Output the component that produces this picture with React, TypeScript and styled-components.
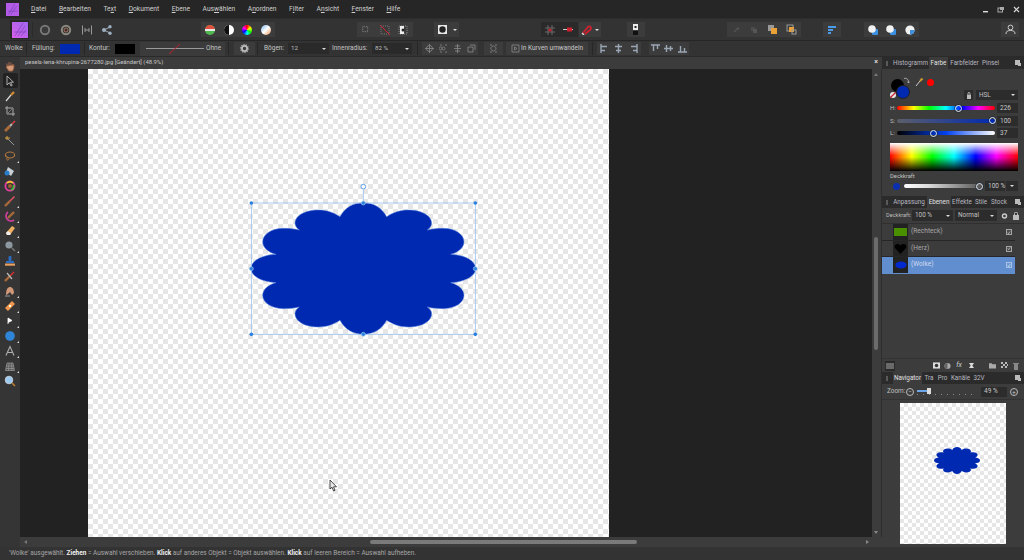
import React from "react";
import styled, { createGlobalStyle } from "styled-components";

const Global = createGlobalStyle`
  html, body { margin: 0; padding: 0; background: #333; overflow: hidden; }
  * { box-sizing: border-box; }
  body { font-family: Roboto, "Liberation Sans", sans-serif; }
`;

const Page = styled.div`
  width: 1024px; height: 560px; display: flex; flex-direction: column; overflow: hidden;
  background: #333; color: #c8c8c8; font-size: 7px; line-height: 1;
`;

/* ---------- Menu ---------- */
const MenuBar = styled.header`
  height: 18px; background: #262626; display: flex; align-items: center; padding-left: 6px; position: relative;
`;
const MenuList = styled.nav`display: flex; margin-left: 12px; gap: 12.5px; font-size: 6.7px; color: #cfcfcf;`;
const MenuItem = styled.span`u { text-decoration: underline; }`;
const WindowButtons = styled.div`margin-left: auto; display: flex; gap: 8px; padding-right: 4px; align-items: center;`;

/* ---------- Toolbar ---------- */
const Toolbar = styled.div`
  height: 23px; background: #333; border-top: 1px solid #2c2c2c; border-bottom: 1px solid #262626;
  display: flex; align-items: center;
`;
const Group = styled.div<{ $ml: number; $dark?: boolean }>`
  display: flex; margin-left: ${p => p.$ml}px; height: 15px;
  background: ${p => (p.$dark ? "#272727" : "transparent")};
`;
const Tile = styled.div<{ $w?: number; $bg?: string }>`
  width: ${p => p.$w ?? 18.5}px; height: 100%; display: flex; align-items: center; justify-content: center; flex: none;
  background: ${p => p.$bg ?? "#3c3c3c"};
`;
const LogoWell = styled.div`
  margin-left: 10px; width: 19px; height: 19px; background: #272727; display: flex; align-items: center; justify-content: center;
`;
const ToolSep = styled.div`width: 1px; height: 15px; background: #2a2a2a; margin-left: 3px;`;
const Plain = styled.div<{ $ml: number }>`margin-left: ${p => p.$ml}px; width: 12px; height: 14px; display: flex; align-items: center; justify-content: center;`;
const Caret = styled.span`
  width: 0; height: 0; border-left: 2px solid transparent; border-right: 2px solid transparent; border-top: 2px solid #ddd;
`;

/* ---------- Context bar ---------- */
const ContextBar = styled.div`
  height: 16px; background: #333; border-bottom: 1px solid #2a2a2a; display: flex; align-items: center; font-size: 6.5px; color: #c4c4c4;
`;
const CtxLabel = styled.span<{ $ml: number; $w?: number }>`margin-left: ${p => p.$ml}px; width: ${p => (p.$w ? p.$w + "px" : "auto")}; white-space: nowrap; flex: none;`;
const CtxSep = styled.div<{ $ml: number }>`width: 1px; height: 13px; background: #262626; margin-left: ${p => p.$ml}px; flex: none;`;
const Swatch = styled.div<{ $c: string; $ml: number }>`width: 20px; height: 10px; background: ${p => p.$c}; margin-left: ${p => p.$ml}px; flex: none;`;
const StrokeBox = styled.div`
  margin-left: 5px; width: 85px; height: 14px; background: #3b3b3b; display: flex; align-items: center; padding-left: 6px; position: relative; font-size: 6.5px; flex: none;
`;
const StrokeLine = styled.div`width: 58px; height: 1px; background: #999; margin-right: 2px;`;
const RedSlash = styled.svg`position: absolute; left: 28px; top: 1px;`;
const NumBox = styled.div<{ $ml: number; $w: number }>`
  margin-left: ${p => p.$ml}px; width: ${p => p.$w}px; height: 11px; background: #2a2a2a; display: flex; align-items: center; flex: none;
  justify-content: space-between; padding: 0 3px; font-size: 6.2px; color: #bdbdbd;
`;
const CtxTile = styled(Tile)<{ $ml?: number }>`margin-left: ${p => p.$ml ?? 0}px; height: 13px;`;
const CurveButton = styled.div`
  margin-left: 3px; width: 82px; height: 13px; background: #3c3c3c; display: flex; align-items: center; padding-left: 5px; gap: 1px; font-size: 6.5px; white-space: nowrap; color: #c8c8c8; flex: none;
`;

/* ---------- Main ---------- */
const Main = styled.div`flex: 1; display: flex; min-height: 0;`;
const ToolColumn = styled.aside`
  width: 20px; background: #353535; padding-top: 1px; display: flex; flex-direction: column; align-items: center;
`;
const ToolSlot = styled.div<{ $active?: boolean }>`
  width: 15px; height: 15px; display: flex; align-items: center; justify-content: center; position: relative; flex: none;
  background: ${p => (p.$active ? "#222" : "transparent")}; border-radius: 2px;
`;
const Corner = styled.i`
  position: absolute; right: -1px; bottom: 0; width: 0; height: 0; border-left: 2.5px solid transparent; border-bottom: 2.5px solid #ddd;
`;
const Centre = styled.div`width: 862px; display: flex; flex-direction: column;`;
const DocTab = styled.div`
  height: 12px; background: #3c3c3c; display: flex; align-items: center; padding-left: 5px; font-size: 5.9px; color: #c8c8c8; position: relative; flex: none;
`;
const TabClose = styled.span`position: absolute; right: 4px; top: 2px; font-size: 7px; color: #ddd; font-weight: 700;`;
const CanvasRow = styled.div`flex: 1; display: flex; min-height: 0;`;
const Canvas = styled.div`flex: 1; background: #222; padding-left: 68px; position: relative;`;
const Checker = styled.div<{ $size: number }>`
  background-color: #fff;
  background-image: conic-gradient(#e6e6e6 25%, transparent 0 50%, #e6e6e6 0 75%, transparent 0);
  background-size: ${p => p.$size}px ${p => p.$size}px;
`;
const Document = styled(Checker)`width: 521px; height: 100%; position: relative;`;
const Overlay = styled.svg`position: absolute; left: 152px; top: 106px;`;
const Pointer = styled.svg`position: absolute; left: 241px; top: 410px;`;
const VScroll = styled.div`width: 10px; background: #3c3c3c; position: relative; border-right: 1px solid #2e2e2e;`;
const VThumb = styled.div`position: absolute; left: 2px; top: 168px; width: 4px; height: 113px; background: #6c6c6c; border-radius: 2px;`;
const ArrowUp = styled.i`position: absolute; left: 2px; top: 4px; border-left: 2px solid transparent; border-right: 2px solid transparent; border-bottom: 3px solid #777;`;
const ArrowDown = styled.i`position: absolute; left: 2px; bottom: 3px; border-left: 2px solid transparent; border-right: 2px solid transparent; border-top: 3px solid #888;`;
const HScroll = styled.div`height: 10px; background: #3c3c3c; display: flex; align-items: center; position: relative; flex: none;`;
const HThumb = styled.div`position: absolute; left: 350px; width: 267px; height: 4px; background: #7a7a7a; border-radius: 2px;`;
const ArrowLeft = styled.i`position: absolute; left: 4px; border-top: 2px solid transparent; border-bottom: 2px solid transparent; border-right: 3px solid #777;`;
const ArrowRight = styled.i`position: absolute; right: 13px; border-top: 2px solid transparent; border-bottom: 2px solid transparent; border-left: 3px solid #888;`;
const StatusBar = styled.footer`
  height: 13px; background: #333; display: flex; align-items: center; padding-left: 9px; font-size: 6.45px; color: #a6a6a6; white-space: nowrap;
  b { color: #f0f0f0; font-weight: 700; }
`;

/* ---------- Right panel ---------- */
const Side = styled.aside`width: 142px; background: #3c3c3c; display: flex; flex-direction: column;`;
const Tabs = styled.div`height: 12px; background: #2b2b2b; display: flex; align-items: stretch; position: relative; flex: none; font-size: 6.3px; color: #b8b8c0;`;
const Grip = styled.i`width: 2px; height: 5px; margin: 3.5px 0 0 4px; background: #5a5a5a; flex: none;`;
const TabLabel = styled.span<{ $active?: boolean; $ml: number; $w: number }>`
  display: flex; align-items: center; justify-content: center; width: ${p => p.$w}px; margin-left: ${p => p.$ml}px; white-space: nowrap; flex: none;
  background: ${p => (p.$active ? "#3c3c3c" : "transparent")}; color: ${p => (p.$active ? "#e2e2e2" : "#b8b8c0")};
`;
const TabMenu = styled.i`position: absolute; right: 4px; top: 3px; width: 5px; height: 5px; background: #bbb; box-shadow: 2px 2px 0 -1px #bbb;`;

const ColourPanel = styled.section`height: 127px; padding: 0 6px 0 8px; display: flex; flex-direction: column; position: relative; flex: none;`;
const ColourTop = styled.div`height: 33px; position: relative; flex: none;`;
const Dot = styled.i<{ $x: number; $y: number; $d: number; $c: string; $ring?: string }>`
  position: absolute; left: ${p => p.$x}px; top: ${p => p.$y}px; width: ${p => p.$d}px; height: ${p => p.$d}px; border-radius: 50%;
  background: ${p => p.$c}; ${p => (p.$ring ? `border: 1px solid ${p.$ring};` : "")}
`;
const Dropper = styled.svg`position: absolute; left: 25px; top: 8px;`;
const SwapArrow = styled.svg`position: absolute; left: 13px; top: 8px;`;
const NoneMark = styled.svg`position: absolute; left: 0; top: 23px;`;
const ColourControls = styled.div`position: absolute; right: 0; top: 21px; display: flex; align-items: center; gap: 3px;`;
const LockButton = styled.div`width: 9px; height: 10px; background: #2c2c2c; display: flex; align-items: center; justify-content: center;`;
const Select = styled.div<{ $w: number; $h?: number }>`
  width: ${p => p.$w}px; height: ${p => p.$h ?? 10}px; background: #2c2c2c; display: flex; align-items: center; justify-content: space-between; padding: 0 3px;
  font-size: 6.4px; color: #c2c2c2; flex: none;
`;
const SliderRow = styled.div`height: 12.5px; display: flex; align-items: center; flex: none;`;
const SliderLabel = styled.span`width: 7px; font-size: 6.2px; color: #bbb;`;
const Track = styled.div<{ $bg: string }>`width: 98px; height: 4px; border-radius: 2px; background: ${p => p.$bg}; position: relative;`;
const Knob = styled.i<{ $at: number }>`
  position: absolute; left: ${p => p.$at}px; top: -1.5px; width: 7px; height: 7px; border-radius: 50%; border: 1px solid #dfe6f2; background: transparent; box-shadow: 0 0 0 .5px #123;
`;
const ValueBox = styled.div<{ $ml?: number; $w?: number }>`
  margin-left: ${p => p.$ml ?? 2}px; width: ${p => p.$w ?? 21}px; height: 10px; background: #2c2c2c; display: flex; align-items: center; padding-left: 3px; font-size: 6.5px; color: #c8c8c8; white-space: nowrap; flex: none;
`;
const Spectrum = styled.div`
  margin-top: 3.5px; height: 28px; flex: none; position: relative;
  background:
    linear-gradient(to bottom, rgba(255,255,255,1) 0%, rgba(255,255,255,0) 45%, rgba(0,0,0,0) 50%, rgba(0,0,0,1) 100%),
    linear-gradient(to right, #f00, #ff0 17%, #0f0 33%, #0ff 50%, #00f 67%, #f0f 83%, #f00);
`;
const OpacityLabel = styled.div`margin-top: 2.5px; font-size: 5.8px; color: #c0c0c0; height: 7px; display: flex; align-items: center;`;
const OpacityRow = styled.div`display: flex; align-items: center; height: 10px; margin-top: .5px;`;
const OpacityDot = styled.i`width: 7px; height: 7px; border-radius: 50%; background: #0a2fb0; margin-left: 2.5px; flex: none;`;
const OpacityTrack = styled.div`
  margin-left: 4.5px; width: 78px; height: 4px; position: relative; border-radius: 2px; flex: none;
  background: linear-gradient(to right, #fff, #ddd 30%, #555 100%);
`;
const CaretTile = styled(Tile)`margin-left: 1px;`;
const LayerTools = styled.div`height: 16px; display: flex; align-items: center; padding-left: 4px; gap: 2px; font-size: 5.6px; flex: none; color: #bbb; border-bottom: 1px solid #2f2f2f;`;
const ToolsLabel = styled.span`width: 24px; white-space: nowrap;`;
const LayerList = styled.ul`list-style: none; margin: 0 9px 0 0; padding: 0; flex: none;`;
const LayerRow = styled.li<{ $sel?: boolean }>`
  height: 16.5px; display: flex; align-items: center; padding-left: 11px; border-bottom: 1px solid ${p => (p.$sel ? "transparent" : "#262626")};
  background: ${p => (p.$sel ? "#618ecf" : "transparent")}; font-size: 6.6px; color: ${p => (p.$sel ? "#cfdcf0" : "#a8a8a8")}; position: relative;
`;
const Thumb = styled.div`width: 15px; height: 15.5px; background: #222; display: flex; align-items: center; justify-content: center; margin-right: 3px; flex: none;`;
const Check = styled.div<{ $sel?: boolean }>`
  position: absolute; right: 3px; top: 5px; width: 6px; height: 6px; border: 1px solid ${p => (p.$sel ? "#a8c0e4" : "#a5a5a5")}; background: ${p => (p.$sel ? "#6f97d4" : "#4a4a4a")};
  display:flex; align-items:center; justify-content:center;
`;
const LayersSpace = styled.div`height: 84.5px; flex: none;`;
const LayerFooter = styled.div`height: 14px; flex: none; background: #3c3c3c; border-top: 1px solid #333; display: flex; align-items: center; position: relative;`;
const StackBtn = styled.div`width: 10px; height: 10px; background: #2a2a2a; margin-left: 3px; display: flex; align-items: center; justify-content: center; flex: none;`;
const FootIcon = styled.div<{ $ml: number }>`width: 7px; height: 7px; margin-left: ${p => p.$ml}px; display: flex; align-items: center; justify-content: center; font-size: 7px; color: #ccc; font-style: italic; flex: none;`;
const ZoomRow = styled.div`height: 16px; flex: none; display: flex; align-items: center; padding-left: 5px; font-size: 6.4px; color: #c0c0c0; border-bottom: 1px solid #333;`;
const ZoomLabel = styled.span`width: 17px; flex: none;`;
const RoundBtn = styled.div<{ $ml: number }>`
  width: 8px; height: 8px; border-radius: 50%; border: 1px solid #bbb; margin-left: ${p => p.$ml}px; display: flex; align-items: center; justify-content: center; font-size: 6px; color: #ccc; flex: none;
`;
const ZoomTrack = styled.div`
  margin-left: 3px; width: 60px; height: 8px; position: relative; flex: none;
  background: repeating-linear-gradient(to right, #8a8a8a 0 1px, transparent 1px 6px) 0 6px / 100% 1px no-repeat;
`;
const ZoomFill = styled.i`position: absolute; left: 0; top: 2px; width: 12px; height: 2px; background: #6ea5e8;`;
const ZoomKnob = styled.i`position: absolute; left: 10px; top: 0; width: 4px; height: 6px; background: #ddd;`;
const PreviewWrap = styled.div`flex: 1; min-height: 0; padding: 3px 18px; display: flex;`;
const Preview = styled(Checker)`width: 106px; height: 100%; display: flex; align-items: flex-start; justify-content: flex-start; padding: 44px 0 0 34px;`;

/* ---------- Drawings ---------- */
type Pt = [number, number];
type Seg = [Pt, Pt, Pt];
const CX = 370, CY = 280.5;
const start: Pt = [CX, 83];
const quarter: Seg[] = [
  [[340, 83], [315, 97], [300, 125]],
  [[280, 112], [260, 105], [235, 105]],
  [[195, 105], [165, 122], [165, 145]],
  [[165, 152], [170, 160], [178, 165]],
  [[165, 162], [150, 160], [130, 160]],
  [[95, 160], [68, 178], [68, 200]],
  [[68, 218], [85, 232], [108, 238]],
  [[65, 240], [33, 258], [33, CY]],
];
const reverse = (from: Pt, segs: Seg[]): Seg[] => {
  const pts = [from, ...segs.map(s => s[2])];
  return segs.map((_, i) => {
    const k = segs.length - 1 - i;
    return [segs[k][1], segs[k][0], pts[k]] as Seg;
  });
};
const mapSegs = (segs: Seg[], f: (p: Pt) => Pt): Seg[] => segs.map(s => [f(s[0]), f(s[1]), f(s[2])] as Seg);
const my = (p: Pt): Pt => [p[0], 2 * CY - p[1]];
const mx = (p: Pt): Pt => [2 * CX - p[0], p[1]];
const leftBottom = mapSegs(reverse(start, quarter), my);
const bottomRight = mapSegs(quarter, p => mx(my(p)));
const rightTop = mapSegs(reverse(start, quarter), mx);
const cloud = `M${start.join(" ")}` + [...quarter, ...leftBottom, ...bottomRight, ...rightTop]
  .map(s => `C${s[0].join(" ")} ${s[1].join(" ")} ${s[2].join(" ")}`).join("") + "Z";

const Logo = () => (
  <svg width="16" height="16" viewBox="0 0 16 16">
    <defs><linearGradient id="lg" x1="0" y1="1" x2="1" y2="0"><stop offset="0" stopColor="#d860ea" /><stop offset="1" stopColor="#a266f0" /></linearGradient></defs>
    <rect width="16" height="16" fill="url(#lg)" />
    <path d="M3 14L11 1M6 14L13 4M2 10H14M9 14L14 8" stroke="#7a45b8" strokeWidth=".7" fill="none" />
  </svg>
);
const S = ({ children, w = 12, h = 12, vb = "0 0 12 12" }: { children: React.ReactNode; w?: number; h?: number; vb?: string }) => (
  <svg width={w} height={h} viewBox={vb}>{children}</svg>
);
const Ring = ({ a, b }: { a: string; b: string }) => (
  <S><circle cx="6" cy="6" r="4.2" fill="none" stroke={a} strokeWidth="2" /><circle cx="6" cy="6" r="2" fill="none" stroke={b} strokeWidth="1" /></S>
);
const Studio = () => <S w={10} h={10}><rect x="2" y="2" width="6" height="6" fill="none" stroke="#999" strokeDasharray="1 1" /></S>;
const Disc = ({ main, sub }: { main: string; sub: string }) => (
  <S>
    <rect x="5" y="5" width="6" height="6" rx="1" fill={sub} />
    <circle cx="5" cy="5" r="3.8" fill={main} />
  </S>
);

const tools: { i: React.ReactNode; c?: boolean; a?: boolean }[] = [
  { i: <S><path d="M3 6V3.5M5 5V2M7 5V2.5M9 6V4M3 6L2.5 7.5 5 11H8.5L9.8 8V5Z" stroke="#a0684a" strokeWidth="1" fill="#d59a78" /></S> },
  { i: <S><path d="M3 1V10L5.3 7.7 7 11 8.2 10.4 6.6 7.2H9.5Z" fill="#222" stroke="#ccc" strokeWidth=".8" /></S>, a: true },
  { i: <S><path d="M2 11L7 5" stroke="#ddd" strokeWidth="1.2" /><path d="M7 5L10 2" stroke="#d08a30" strokeWidth="2.4" /></S> },
  { i: <S><path d="M3 1V9H11M1 3H9V11" stroke="#aaa" fill="none" strokeWidth="1" /><path d="M3 9L9 3" stroke="#777" /></S> },
  { i: <S><path d="M1 11L6 6" stroke="#a96a3a" strokeWidth="3" /><path d="M6 6L8 4" stroke="#bbb" strokeWidth="2" /><path d="M8 4L11 1" stroke="#d84040" strokeWidth="1.6" /></S> },
  { i: <S><path d="M3 3L10 10" stroke="#999" strokeWidth="1" /><path d="M1 3H6M3 1V5" stroke="#d8a040" strokeWidth="1" /></S> },
  { i: <S><ellipse cx="6" cy="5" rx="4.6" ry="3" fill="none" stroke="#b07840" strokeWidth="1.2" /><path d="M3 8C2 10 4 11 5 9" fill="none" stroke="#b07840" /></S>, c: true },
  { i: <S><path d="M4 2L10 6 7 11 2 7Z" fill="#c8d0d8" /><circle cx="3" cy="8" r="2.5" fill="#2a7cc8" /></S> },
  { i: <S><circle cx="6" cy="6" r="4.6" fill="none" stroke="#e040a0" strokeWidth="1.8" /><path d="M3 3A4.6 4.6 0 0 1 9 3" stroke="#f0c030" strokeWidth="1.8" fill="none" /><path d="M9.6 5A4.6 4.6 0 0 1 7 10" stroke="#40c040" strokeWidth="1.8" fill="none" /><circle cx="6" cy="6" r="2" fill="#a06030" /></S> },
  { i: <S><path d="M1 11L6 6" stroke="#a96a3a" strokeWidth="2.4" /><path d="M6 6L10.5 1.5" stroke="#e05060" strokeWidth="1.6" /></S>, c: true },
  { i: <S><path d="M4 2A5 5 0 1 0 10 10" stroke="#d040a0" strokeWidth="1.6" fill="none" /><path d="M4 8L10 2" stroke="#a96a3a" strokeWidth="2.4" /></S>, c: true },
  { i: <S><path d="M2 8L8 1 11 3 6 10H3Z" fill="#eeb060" /><path d="M2 8L3 10H6L7 8.5 4 6Z" fill="#eee" /></S>, c: true },
  { i: <S><circle cx="5" cy="5" r="3.6" fill="#8d979f" /><path d="M8 8L11 11" stroke="#777" strokeWidth="1.5" /></S>, c: true },
  { i: <S><rect x="4.5" y="1" width="3" height="5" rx="1" fill="#2a6cc0" /><rect x="2" y="6" width="8" height="2" fill="#2a6cc0" /><rect x="1" y="8.5" width="10" height="2.2" fill="#e8a060" /></S> },
  { i: <S><path d="M1 11L6 6" stroke="#a96a3a" strokeWidth="2.4" /><path d="M6 6L10 2" stroke="#d03030" strokeWidth="1.6" /><path d="M3 3L8 9" stroke="#bbb" strokeWidth="1.2" /></S> },
  { i: <S><path d="M2 10C2 4 4 2 6 2S10 4 10 8L8 10 6 7 4 9Z" fill="#d09878" /><path d="M1 11H6" stroke="#999" /></S>, c: true },
  { i: <S><path d="M2 8L8 2 10 4 4 10Z" fill="#f09a50" stroke="#f09a50" strokeWidth="1.4" /><rect x="5" y="5" width="2" height="2" fill="#ffd" /></S>, c: true },
  { i: <S><path d="M4 3V9M4 3L8 5.5 4 7.5" fill="#fff" stroke="#fff" strokeWidth=".8" /></S>, c: true },
  { i: <S><circle cx="6" cy="6" r="4.8" fill="#2f86d8" /></S>, c: true },
  { i: <S><path d="M2 10.5L6 1.5 10 10.5M4 7.5H8" fill="none" stroke="#b0b0b0" strokeWidth="1.1" /></S>, c: true },
  { i: <S><path d="M1.5 10.5L3 3H9L10.5 10.5ZM5 3L4.5 10.5M7.5 3L8 10.5M2.3 6H9.7M2 8.5H10" fill="#555" stroke="#999" strokeWidth=".7" /></S>, c: true },
  { i: <S><circle cx="5" cy="5" r="3.8" fill="#9ccaf0" stroke="#d0d8e0" strokeWidth=".8" /><path d="M8 8L11 11" stroke="#c08030" strokeWidth="1.5" /></S> },
];

const AlignIcon = ({ d }: { d: string }) => <S w={9} h={9} vb="0 0 9 9"><path d={d} stroke="#9aa6b4" strokeWidth="1.4" fill="none" /></S>;
const SnapIcon = ({ d }: { d: string }) => <S w={9} h={9} vb="0 0 9 9"><path d={d} stroke="#8a8a8a" strokeWidth=".8" fill="none" /></S>;
const Tick = ({ c }: { c: string }) => <S w={5} h={5} vb="0 0 5 5"><path d="M1 2.5L2 4 4 1" stroke={c} fill="none" strokeWidth=".8" /></S>;

const menu: [string, string, string][] = [
  ["", "D", "atei"], ["", "B", "earbeiten"], ["Te", "x", "t"], ["", "D", "okument"], ["", "E", "bene"],
  ["Aus", "w", "ählen"], ["A", "n", "ordnen"], ["F", "i", "lter"], ["A", "n", "sicht"], ["", "F", "enster"], ["", "H", "ilfe"],
];

export default function App() {
  return (
    <Page>
      <Global />
      <MenuBar>
        <S w={13} h={13} vb="0 0 16 16"><rect width="16" height="16" fill="#b45ce8" /><path d="M3 14L11 1M6 14L13 4M2 10H14" stroke="#7a45b8" strokeWidth=".9" /></S>
        <MenuList>
          {menu.map(([a, b, c]) => <MenuItem key={a + b + c}>{a}<u>{b}</u>{c}</MenuItem>)}
        </MenuList>
        <WindowButtons>
          <S w={7} h={7} vb="0 0 7 7"><rect x="1" y="5" width="5" height="1.4" fill="#ddd" /></S>
          <S w={8} h={7} vb="0 0 8 7"><rect x="1" y="2" width="4.5" height="4" fill="none" stroke="#aaa" /><rect x="3" y="1" width="4" height="3" fill="#aaa" /></S>
          <S w={7} h={7} vb="0 0 7 7"><path d="M1 1L6 6M6 1L1 6" stroke="#ddd" strokeWidth="1.2" /></S>
        </WindowButtons>
      </MenuBar>

      <Toolbar>
        <LogoWell><Logo /></LogoWell>
        <ToolSep />
        <Plain $ml={6}><Ring a="#777" b="#444" /></Plain>
        <Plain $ml={9}><Ring a="#8a8a80" b="#a87060" /></Plain>
        <Plain $ml={9}><S><path d="M1.5 1.5V10.5M10.5 1.5V10.5M4 6H8M4 4V8M8 4V8" stroke="#999" strokeWidth="1" /></S></Plain>
        <Plain $ml={8}><S><circle cx="3" cy="6" r="2" fill="#9fb0c0" /><circle cx="9" cy="2.8" r="1.7" fill="#9fb0c0" /><circle cx="9" cy="9.2" r="1.7" fill="#9fb0c0" /><path d="M3 6L9 3M3 6L9 9" stroke="#9fb0c0" /></S></Plain>
        <Group $ml={88}>
          <Tile><S><circle cx="6" cy="6" r="5" fill="#50b850" /><path d="M1 6A5 5 0 0 1 11 6Z" fill="#e05040" /><rect x="1" y="5" width="10" height="2" fill="#e8e8e8" /></S></Tile>
          <Tile><S><circle cx="6" cy="6" r="5" fill="#fff" /><path d="M6 1A5 5 0 0 0 6 11Z" fill="#111" /></S></Tile>
          <Tile><div style={{ width: 10, height: 10, borderRadius: "50%", background: "conic-gradient(#f00,#ff0,#0f0,#0ff,#00f,#f0f,#f00)" }} /></Tile>
          <Tile><S><defs><linearGradient id="b" x1="0" y1="0" x2="1" y2="1"><stop offset="0" stopColor="#7ab8f0" /><stop offset=".5" stopColor="#fff" /><stop offset="1" stopColor="#f09050" /></linearGradient></defs><circle cx="6" cy="6" r="5" fill="url(#b)" /></S></Tile>
        </Group>
        <Group $ml={82}>
          <Tile><Studio /></Tile>
          <Tile><S w={10} h={10} vb="0 0 10 10"><rect x="1" y="1" width="8" height="8" fill="none" stroke="#777" strokeDasharray="1 1" /><path d="M0 0L10 10" stroke="#d02030" /></S></Tile>
          <Tile><S w={10} h={10} vb="0 0 10 10"><rect x="1" y="1" width="8" height="8" fill="none" stroke="#888" strokeDasharray="1 1" /><rect x="2" y="1" width="4" height="8" fill="#eee" /><circle cx="5" cy="5" r="1.5" fill="#222" /></S></Tile>
        </Group>
        <Group $ml={21}>
          <Tile $w={18}><S w={11} h={11} vb="0 0 11 11"><rect x="1" y="1" width="9" height="9" fill="#e8e8e8" /><circle cx="5.5" cy="5.5" r="3.2" fill="#222" /></S></Tile>
          <Tile $w={7}><Caret /></Tile>
        </Group>
        <Group $ml={82} $dark>
          <Tile $w={18.5} $bg="#2a2a2a"><S w={10} h={10} vb="0 0 10 10"><path d="M3 0V10M7 0V10M0 3H10M0 7H10" stroke="#777" strokeWidth=".8" /><circle cx="5" cy="5" r="1.6" fill="#d02030" /></S></Tile>
          <Tile $w={18.5} $bg="#2a2a2a"><S w={10} h={10} vb="0 0 10 10"><rect x="0" y="4" width="10" height="1" fill="#ccc" /><rect x="4" y="2.5" width="5" height="4" fill="#d02030" /></S></Tile>
        </Group>
        <Group $ml={1}>
          <Tile $w={15}><S w={11} h={11} vb="0 0 11 11"><path d="M2 9L7 3C9 1 11 4 9 6L4 10" fill="none" stroke="#d02030" strokeWidth="1.8" /><path d="M1 9L3 11" stroke="#ddd" strokeWidth="1.4" /></S></Tile>
          <Tile $w={7}><Caret /></Tile>
        </Group>
        <Group $ml={26}>
          <Tile $w={18}><S w={9} h={11} vb="0 0 9 11"><rect x="2" y="0" width="5" height="6" fill="#eee" /><rect x="3.5" y="2" width="2" height="2" fill="#222" /><rect x="2" y="7" width="5" height="4" fill="#111" /></S></Tile>
        </Group>
        <Group $ml={82}>
          <Tile $w={18.5}><S w={10} h={10} vb="0 0 10 10"><path d="M3 7L7 3M6 3H7.5V4.5" stroke="#555" strokeWidth="1.2" fill="none" /></S></Tile>
          <Tile $w={18.5}><S w={10} h={10} vb="0 0 10 10"><rect x="2" y="2" width="4" height="4" fill="#4c4c4c" /><rect x="4" y="4" width="4" height="4" fill="#555" /></S></Tile>
          <Tile $w={18.5}><S w={11} h={11} vb="0 0 11 11"><rect x="1" y="1" width="6" height="6" fill="#999" /><rect x="4" y="4" width="6" height="6" fill="#eaa238" /></S></Tile>
          <Tile $w={18.5}><S w={11} h={11} vb="0 0 11 11"><rect x="1" y="1" width="6" height="6" fill="none" stroke="#999" /><rect x="3" y="3" width="5" height="5" fill="#eaa238" /><rect x="6" y="6" width="4" height="4" fill="none" stroke="#999" /></S></Tile>
        </Group>
        <Group $ml={22}>
          <Tile $w={18}><S w={10} h={10} vb="0 0 10 10"><rect x="1" y="1" width="8" height="2" fill="#4a9ae8" /><rect x="1" y="4" width="5" height="2" fill="#4a9ae8" /><rect x="1" y="7" width="3" height="2" fill="#4a9ae8" /></S></Tile>
        </Group>
        <Group $ml={23}>
          <Tile><Disc main="#f2f2f2" sub="#3d8fe0" /></Tile>
          <Tile><Disc main="#f2f2f2" sub="#3d8fe0" /></Tile>
          <Tile><S><circle cx="6" cy="6" r="4.6" fill="#f2f2f2" /><path d="M6 6H10.6A4.6 4.6 0 0 1 6 10.6Z" fill="#3d8fe0" /></S></Tile>
        </Group>
        <Group $ml={82}>
          <Tile $w={18}><S w={11} h={11} vb="0 0 11 11"><circle cx="5.5" cy="3.5" r="2.4" fill="none" stroke="#ccc" /><path d="M1 10C1 7 3 6.5 5.5 6.5S10 7 10 10" fill="none" stroke="#ccc" /></S></Tile>
        </Group>
      </Toolbar>

      <ContextBar>
        <CtxLabel $ml={5} $w={17}>Wolke</CtxLabel>
        <CtxSep $ml={4} />
        <CtxLabel $ml={5} $w={23}>Füllung:</CtxLabel>
        <Swatch $c="#0029b2" $ml={5} />
        <CtxSep $ml={4} />
        <CtxLabel $ml={4} $w={21}>Kontur:</CtxLabel>
        <Swatch $c="#000" $ml={5} />
        <StrokeBox>
          <StrokeLine />Ohne
          <RedSlash width="14" height="12" viewBox="0 0 14 12"><path d="M1 11L12 1" stroke="#c02030" strokeWidth="1" /></RedSlash>
        </StrokeBox>
        <CtxSep $ml={3} />
        <CtxTile $w={21} $ml={5}><S w={9} h={9} vb="0 0 9 9"><circle cx="4.5" cy="4.5" r="2.6" fill="none" stroke="#bbb" strokeWidth="1.8" /><circle cx="4.5" cy="4.5" r="3.9" fill="none" stroke="#bbb" strokeWidth="1.1" strokeDasharray="1.2 1.2" /></S></CtxTile>
        <CtxSep $ml={2} />
        <CtxLabel $ml={6} $w={24}>Bögen:</CtxLabel>
        <NumBox $ml={0} $w={41}>12 <Caret /></NumBox>
        <CtxLabel $ml={3} $w={38}>Innenradius:</CtxLabel>
        <NumBox $ml={2} $w={40}>82 % <Caret /></NumBox>
        <CtxSep $ml={5} />
        <CtxTile $w={14} $ml={4}><SnapIcon d="M4.5 0V9M0 4.5H9M4.5 1.5A3 3 0 1 1 4.4 1.5" /></CtxTile>
        <CtxTile $w={14}><SnapIcon d="M1 1H3M6 1H8M1 8H3M6 8H8M3 4.5A1.5 1.5 0 1 1 3 4.4M6 4.5A1.5 1.5 0 1 1 6 4.4" /></CtxTile>
        <CtxTile $w={14}><SnapIcon d="M2 2H7M2 7H7M4.5 0V9M1 4.5H8" /></CtxTile>
        <CtxTile $w={14}><SnapIcon d="M1 3V8H6V3ZM3 1H8V6" /></CtxTile>
        <CtxTile $w={19} $ml={6}><SnapIcon d="M1 1H3M6 1H8M1 8H3M6 8H8M4.5 2A2.5 2.5 0 1 1 4.4 2" /></CtxTile>
        <CurveButton><SnapIcon d="M1 1H8V8H1ZM3.5 3L6 4.5 3.5 6Z" />In Kurven umwandeln</CurveButton>
        <CtxSep $ml={4} />
        <CtxTile $w={14.5} $ml={4}><AlignIcon d="M1 0V9M1 2.5H7M1 6.5H5" /></CtxTile>
        <CtxTile $w={14.5}><AlignIcon d="M4.5 0V9M1 2.5H8M2 6.5H7" /></CtxTile>
        <CtxTile $w={14.5}><AlignIcon d="M8 0V9M2 2.5H8M4 6.5H8" /></CtxTile>
        <CtxTile $w={13.5} $ml={8}><AlignIcon d="M0 1H9M2.5 1V7M6.5 1V5" /></CtxTile>
        <CtxTile $w={13.5}><AlignIcon d="M0 4.5H9M2.5 1V8M6.5 2V7" /></CtxTile>
        <CtxTile $w={13.5}><AlignIcon d="M0 8H9M2.5 2V8M6.5 4V8" /></CtxTile>
      </ContextBar>

      <Main>
        <ToolColumn>
          {tools.map((t, i) => (
            <ToolSlot key={i} $active={t.a}>{t.i}{t.c && <Corner />}</ToolSlot>
          ))}
        </ToolColumn>

        <Centre>
          <DocTab>pexels-lena-khrupina-2677280.jpg [Geändert] (48.9%)<TabClose>×</TabClose></DocTab>
          <CanvasRow>
            <Canvas>
              <Document $size={10}>
                <Overlay width="250" height="170" viewBox="0 0 750 510">
                  <path d={cloud} fill="#0029b2" stroke="#5a86e0" strokeWidth="1.5" />
                  <rect x="34" y="84" width="672" height="394" fill="none" stroke="#9cc2ef" strokeWidth="2.5" />
                  <path d="M370 45V84" stroke="#9cc2ef" strokeWidth="2.5" />
                  <circle cx="370" cy="35" r="7" fill="#fff" stroke="#5e9ee6" strokeWidth="3" />
                  {[[34, 84], [706, 84], [34, 478], [706, 478]].map(([x, y]) => <circle key={`${x}${y}`} cx={x} cy={y} r="5.5" fill="#2a80de" />)}
                  {[[370, 84], [34, 281], [706, 281], [370, 478]].map(([x, y]) => <circle key={`${x}${y}`} cx={x} cy={y} r="6" fill="#2a80de" stroke="#a8ccf0" strokeWidth="2" />)}
                </Overlay>
                <Pointer width="9" height="13" viewBox="0 0 9 13"><path d="M1 1V10L3 8.2 4.6 12 6 11.3 4.5 7.8H7.5Z" fill="#e8e8e8" stroke="#222" strokeWidth=".8" /></Pointer>
              </Document>
            </Canvas>
            <VScroll><ArrowUp /><VThumb /><ArrowDown /></VScroll>
          </CanvasRow>
          <HScroll><ArrowLeft /><HThumb /><ArrowRight /></HScroll>
        </Centre>

        <Side>
          <Tabs>
            <Grip />
            <TabLabel $ml={5} $w={35}>Histogramm</TabLabel>
            <TabLabel $ml={1} $w={19} $active>Farbe</TabLabel>
            <TabLabel $ml={2} $w={29}>Farbfelder</TabLabel>
            <TabLabel $ml={2} $w={19}>Pinsel</TabLabel>
            <TabMenu />
          </Tabs>
          <ColourPanel>
            <ColourTop>
              <Dot $x={0.5} $y={9.5} $d={13} $c="#000" />
              <Dot $x={6} $y={16} $d={14} $c="#0029b2" $ring="#222" />
              <Dot $x={0} $y={23} $d={6} $c="#e8e8e8" />
              <NoneMark width="6" height="6" viewBox="0 0 6 6"><path d="M0.5 5.5L5.5 .5" stroke="#d02030" strokeWidth="1.2" /></NoneMark>
              <SwapArrow width="7" height="7" viewBox="0 0 7 7"><path d="M1 1.5C4 .5 6 3 5.5 6M4.3 4.6L5.5 6 6.7 4.6" stroke="#bbb" strokeWidth=".8" fill="none" /></SwapArrow>
              <Dot $x={36.5} $y={9.5} $d={7} $c="#ff0000" />
              <Dropper width="9" height="10" viewBox="0 0 9 10"><path d="M1 9L5 4" stroke="#ccc" /><path d="M5 4L7.5 1.5" stroke="#d69a30" strokeWidth="2" /></Dropper>
              <ColourControls>
                <LockButton><S w={6} h={7} vb="0 0 6 7"><rect x="1" y="3" width="4" height="4" fill="#bbb" /><path d="M2 3V1.5A1 1 0 0 1 4 1.5V3" fill="none" stroke="#bbb" /></S></LockButton>
                <Select $w={42}>HSL <Caret /></Select>
              </ColourControls>
            </ColourTop>
            <SliderRow>
              <SliderLabel>H:</SliderLabel>
              <Track $bg="linear-gradient(to right,#f00,#ff0 17%,#0f0 33%,#0ff 50%,#00f 67%,#f0f 83%,#f00)"><Knob $at={58} /></Track>
              <ValueBox>226</ValueBox>
            </SliderRow>
            <SliderRow>
              <SliderLabel>S:</SliderLabel>
              <Track $bg="linear-gradient(to right,#5c5f6a,#0029b2)"><Knob $at={92} /></Track>
              <ValueBox>100</ValueBox>
            </SliderRow>
            <SliderRow>
              <SliderLabel>L:</SliderLabel>
              <Track $bg="linear-gradient(to right,#000,#0040f0 50%,#fff)"><Knob $at={33} /></Track>
              <ValueBox>37</ValueBox>
            </SliderRow>
            <Spectrum />
            <OpacityLabel>Deckkraft</OpacityLabel>
            <OpacityRow>
              <OpacityDot />
              <OpacityTrack><Knob $at={72} /></OpacityTrack>
              <ValueBox $ml={3} $w={20}>100 %</ValueBox>
              <CaretTile $w={12} $bg="#2c2c2c"><Caret /></CaretTile>
            </OpacityRow>
          </ColourPanel>

          <Tabs>
            <Grip />
            <TabLabel $ml={5} $w={32}>Anpassung</TabLabel>
            <TabLabel $ml={2} $w={24} $active>Ebenen</TabLabel>
            <TabLabel $ml={0} $w={22}>Effekte</TabLabel>
            <TabLabel $ml={1} $w={14}>Stile</TabLabel>
            <TabLabel $ml={2} $w={18}>Stock</TabLabel>
            <TabMenu />
          </Tabs>
          <LayerTools>
            <ToolsLabel>Deckkraft:</ToolsLabel>
            <Select $w={41} $h={11}>100 % <Caret /></Select>
            <Select $w={42} $h={11}>Normal <Caret /></Select>
            <FootIcon $ml={1.5}><S w={8} h={8} vb="0 0 9 9"><circle cx="4.5" cy="4.5" r="2.6" fill="none" stroke="#ccc" strokeWidth="1.8" /></S></FootIcon>
            <FootIcon $ml={3}><S w={6} h={8} vb="0 0 6 8"><rect x="0" y="3" width="6" height="5" fill="#bbb" /><path d="M1.5 3V1.5A1.5 1.5 0 0 1 4.5 1.5V3" fill="none" stroke="#bbb" /></S></FootIcon>
          </LayerTools>
          <LayerList>
            <LayerRow>
              <Thumb><S w={13} h={8} vb="0 0 13 8"><rect width="13" height="8" fill="#4a8f00" /></S></Thumb>(Rechteck)
              <Check><Tick c="#ddd" /></Check>
            </LayerRow>
            <LayerRow>
              <Thumb><S w={13} h={13} vb="0 0 13 13"><path d="M6.5 12L1 6C-.5 3 3 0 6.5 3.5 10 0 13.5 3 12 6Z" fill="#000" /></S></Thumb>(Herz)
              <Check><Tick c="#ddd" /></Check>
            </LayerRow>
            <LayerRow $sel>
              <Thumb><S w={12} h={8} vb="0 0 12 8"><ellipse cx="6" cy="4" rx="5.6" ry="3.4" fill="#0029d0" /></S></Thumb>(Wolke)
              <Check $sel><Tick c="#cfe" /></Check>
            </LayerRow>
          </LayerList>
          <LayersSpace />
          <LayerFooter>
            <StackBtn><S w={8} h={8} vb="0 0 8 8"><path d="M0 2H8M0 4H8M0 6H8" stroke="#aaa" /></S></StackBtn>
            <FootIcon $ml={37.5}><S w={8} h={7} vb="0 0 8 7"><rect width="8" height="7" fill="#ddd" /><circle cx="4" cy="3.5" r="2" fill="#333" /></S></FootIcon>
            <FootIcon $ml={4}><S w={8} h={8} vb="0 0 8 8"><circle cx="4" cy="4" r="3.5" fill="#aaa" /><path d="M4 .5A3.5 3.5 0 0 0 4 7.5Z" fill="#666" /></S></FootIcon>
            <FootIcon $ml={5}>fx</FootIcon>
            <FootIcon $ml={5}><S w={7} h={7} vb="0 0 7 7"><path d="M1 1H6L4.3 3.5 6 6H1L2.7 3.5Z" fill="#ddd" /></S></FootIcon>
            <FootIcon $ml={14}><S w={8} h={7} vb="0 0 8 7"><path d="M0 1H3L4 2H8V7H0Z" fill="#aaa" /></S></FootIcon>
            <FootIcon $ml={5}><S w={7} h={7} vb="0 0 7 7"><path d="M0 0H2V2H0ZM4 0H6V2H4ZM2 2H4V4H2ZM6 2H7V4H6ZM0 4H2V6H0ZM4 4H6V6H4Z" fill="#bbb" /></S></FootIcon>
            <FootIcon $ml={5}><S w={6} h={8} vb="0 0 6 8"><path d="M0 1H6V2H0ZM1 2H5V8H1Z" fill="#888" /></S></FootIcon>
          </LayerFooter>
          <Tabs>
            <Grip />
            <TabLabel $ml={5} $w={29} $active>Navigator</TabLabel>
            <TabLabel $ml={1} $w={12}>Tra</TabLabel>
            <TabLabel $ml={1} $w={13}>Pro</TabLabel>
            <TabLabel $ml={1} $w={21}>Kanäle</TabLabel>
            <TabLabel $ml={1} $w={14}>32V</TabLabel>
            <TabMenu />
          </Tabs>
          <ZoomRow>
            <ZoomLabel>Zoom:</ZoomLabel>
            <RoundBtn $ml={2}>−</RoundBtn>
            <ZoomTrack><ZoomFill /><ZoomKnob /></ZoomTrack>
            <ValueBox $ml={4} $w={26}>49 %</ValueBox>
            <RoundBtn $ml={3}>+</RoundBtn>
          </ZoomRow>
          <PreviewWrap>
            <Preview $size={8}>
              <svg width="46" height="27" viewBox="33 83 674 395"><path d={cloud} fill="#0029b2" /></svg>
            </Preview>
          </PreviewWrap>
        </Side>
      </Main>

      <StatusBar>
        'Wolke' ausgewählt.&nbsp;<b>Ziehen</b>&nbsp;= Auswahl verschieben.&nbsp;<b>Klick</b>&nbsp;auf anderes Objekt = Objekt auswählen.&nbsp;<b>Klick</b>&nbsp;auf leeren Bereich = Auswahl aufheben.
      </StatusBar>
    </Page>
  );
}
